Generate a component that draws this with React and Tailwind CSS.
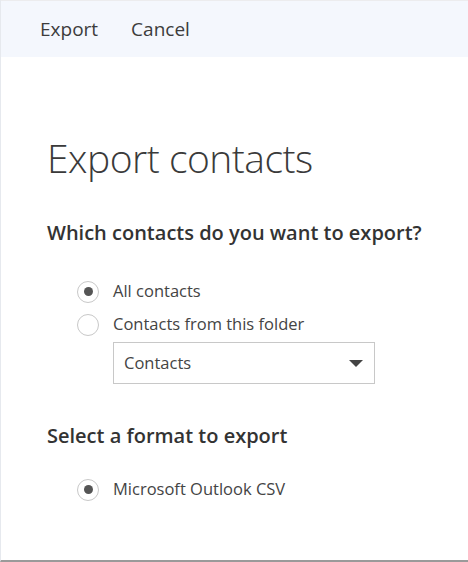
import React, { useState } from 'react';

const font = { fontFamily: '"Open Sans", "Noto Sans", Arial, sans-serif' };

const Radio = ({ checked, label, onClick }) => (
  <button type="button" onClick={onClick} className="flex items-center h-[33px] text-left">
    <span className="w-[22px] h-[22px] rounded-full border border-[#c8c8c8] bg-white flex items-center justify-center shrink-0">
      {checked && <span className="w-[9px] h-[9px] rounded-full bg-[#555]" />}
    </span>
    <span className="ml-[14px] text-[16.5px] text-[#444]">{label}</span>
  </button>
);

export default function App() {
  const [who, setWho] = useState('all');

  return (
    <div className="w-[468px] h-[562px] bg-white border-l border-[#e6e9ee] border-b-2 border-b-[#9a9a9a] overflow-hidden" style={font}>
      {/* Toolbar */}
      <div className="h-[57px] bg-[#f4f7fd] border-t border-[#ececee] flex items-center pl-[39px] gap-[33px] text-[19px] text-[#3c3c3c]">
        <button type="button">Export</button>
        <button type="button">Cancel</button>
      </div>

      <div className="pl-[46px] pr-2">
        <h1 className="mt-[77px] text-[39px] font-light text-[#3a3a3a] leading-[48px] tracking-[-0.5px]">Export contacts</h1>

        <h2 className="mt-[37px] text-[20px] font-semibold text-[#333] leading-[28px] whitespace-nowrap">Which contacts do you want to export?</h2>

        <div className="mt-[28px] pl-[30px] flex flex-col">
          <Radio checked={who === 'all'} label="All contacts" onClick={() => setWho('all')} />
          <Radio checked={who === 'folder'} label="Contacts from this folder" onClick={() => setWho('folder')} />
          <div className="ml-[36px] mt-[1px] w-[262px] h-[42px] border border-[#c8c8c8] flex items-center justify-between pl-[10px] pr-[11px]">
            <span className="text-[16.5px] text-[#444]">Contacts</span>
            <svg width="14" height="7" viewBox="0 0 14 7">
              <path d="M0 0 L14 0 L7 7 Z" fill="#444" />
            </svg>
          </div>
        </div>

        <h2 className="mt-[38px] text-[20px] font-semibold text-[#333] leading-[28px]">Select a format to export</h2>

        <div className="mt-[23px] pl-[30px]">
          <Radio checked label="Microsoft Outlook CSV" />
        </div>
      </div>
    </div>
  );
}
